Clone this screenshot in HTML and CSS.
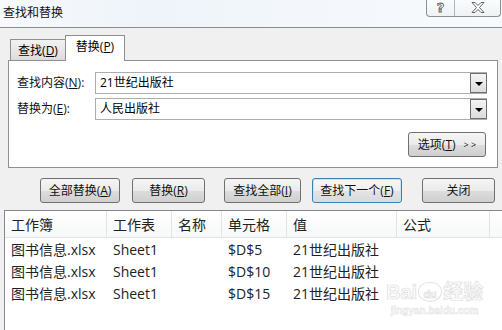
FILE: index.html
```html
<!DOCTYPE html>
<html lang="zh-CN">
<head>
<meta charset="utf-8">
<title>查找和替换</title>
<link rel="stylesheet" href="styles.css">
</head>
<body>
<div class="window">
  <div class="titlebar">
    <span class="title">查找和替换</span>
    <div class="caption-btns">
      <span class="cap help">?</span>
      <span class="cap close">
        <svg width="14" height="11" viewBox="0 0 14 11"><path d="M1 0.5h3l3 3 3-3h3l-4.5 5 4.5 5h-3l-3-3-3 3h-3l4.5-5z" fill="#fff" stroke="#555" stroke-width="0.9" stroke-linejoin="round"/></svg>
      </span>
    </div>
  </div>
  <div class="body">
    <div class="tabs">
      <div class="tab">查找(<u>D</u>)</div>
      <div class="tab active">替换(<u>P</u>)</div>
    </div>
    <div class="panel">
      <div class="field">
        <label>查找内容(<u>N</u>):</label>
        <div class="combo"><span class="val">21世纪出版社</span><span class="drop"></span></div>
      </div>
      <div class="field">
        <label>替换为(<u>E</u>):</label>
        <div class="combo"><span class="val">人民出版社</span><span class="drop"></span></div>
      </div>
      <div class="opts-row">
        <button class="btn opts">选项(<u>T</u>)<span class="chev">&gt; &gt;</span></button>
      </div>
    </div>
    <div class="actions">
      <button class="btn w-all">全部替换(<u>A</u>)</button>
      <button class="btn w-rep">替换(<u>R</u>)</button>
      <button class="btn w-findall">查找全部(<u>I</u>)</button>
      <button class="btn w-next focused">查找下一个(<u>F</u>)</button>
      <button class="btn w-close">关闭</button>
    </div>
    <div class="results">
      <div class="row head">
        <span>工作簿</span><span>工作表</span><span>名称</span><span>单元格</span><span>值</span><span>公式</span><span></span>
      </div>
      <div class="row">
        <span>图书信息.xlsx</span><span>Sheet1</span><span></span><span>$D$5</span><span>21世纪出版社</span><span></span><span></span>
      </div>
      <div class="row">
        <span>图书信息.xlsx</span><span>Sheet1</span><span></span><span>$D$10</span><span>21世纪出版社</span><span></span><span></span>
      </div>
      <div class="row">
        <span>图书信息.xlsx</span><span>Sheet1</span><span></span><span>$D$15</span><span>21世纪出版社</span><span></span><span></span>
      </div>
      <div class="watermark">
        <div class="wm-main">Bai<span class="paw">du</span>经验</div>
        <div class="wm-sub">jingyan.baidu.com</div>
      </div>
    </div>
  </div>
</div>
</body>
</html>
```
FILE: styles.css
```css
* { box-sizing: border-box; }
html, body { margin: 0; padding: 0; }
body {
  width: 502px;
  height: 330px;
  overflow: hidden;
  background: #f0f0f0;
  font-family: "Open Sans", "Noto Sans CJK SC", sans-serif;
  color: #000;
}
u { text-decoration: underline; text-underline-offset: 1px; }

.window { width: 502px; height: 330px; display: flex; flex-direction: column; }

.titlebar {
  height: 28px;
  flex: none;
  background: linear-gradient(90deg, #f7f9fc 0%, #eef4fa 30%, #f3f7fb 60%, #f7fafd 100%);
  border-bottom: 1px solid #8c8c8c;
  display: flex;
  align-items: flex-start;
  justify-content: space-between;
}
.title {
  font-size: 12px;
  line-height: 14px;
  margin: 6px 0 0 3px;
  color: #111;
}
.caption-btns {
  display: flex;
  height: 18px;
  margin-top: -1px;
  margin-right: 1px;
  border: 1px solid #8f8f8f;
  border-top: none;
  border-radius: 0 0 4px 4px;
  background: linear-gradient(#fbfcfd, #eef2f6);
}
.cap {
  display: flex;
  align-items: center;
  justify-content: center;
  height: 17px;
}
.help {
  width: 28px;
  border-right: 1px solid #b5b5b5;
  font-family: "DejaVu Sans", sans-serif;
  font-size: 13px;
  font-weight: bold;
  color: #fff;
  -webkit-text-stroke: 0.8px #555;
}
.close { width: 45px; }

.body { flex: 1; display: flex; flex-direction: column; }

.tabs {
  display: flex;
  align-items: flex-end;
  height: 25px;
  margin-top: 7px;
  padding-left: 10px;
  position: relative;
  z-index: 1;
}
.tab {
  font-size: 12px;
  line-height: 14px;
  border: 1px solid #8e8f8f;
  border-bottom: none;
  display: flex;
  align-items: center;
  justify-content: center;
}
.tab:first-child {
  width: 55px;
  height: 21px;
  border-right: none;
  background: linear-gradient(#f2f2f2, #dcdcdc);
  padding-top: 1px;
}
.tab.active {
  width: 60px;
  height: 26px;
  margin-bottom: -1px;
  background: #fff;
  padding-bottom: 3px;
}

.panel {
  margin-left: 8px;
  width: 490px;
  height: 108px;
  background: #fff;
  border: 1px solid #8e8f8f;
  padding: 11px 10px 10px 8px;
  display: flex;
  flex-direction: column;
  gap: 4px;
}
.field { display: flex; align-items: center; height: 22px; }
.field label {
  width: 78px;
  font-size: 12px;
  line-height: 14px;
  color: #111;
}
.combo {
  flex: 1;
  height: 22px;
  border: 1px solid #abadb3;
  display: flex;
  align-items: center;
  justify-content: space-between;
  padding-left: 4px;
}
.val { font-size: 12px; line-height: 14px; }
.drop {
  width: 17px;
  height: 20px;
  border: 1px solid #707070;
  background: linear-gradient(#f4f4f4, #dcdcdc);
  margin-right: -1px;
  position: relative;
}
.drop::after {
  content: "";
  position: absolute;
  left: 4px;
  top: 8px;
  border-left: 4px solid transparent;
  border-right: 4px solid transparent;
  border-top: 4px solid #000;
}
.opts-row { display: flex; justify-content: flex-end; margin-top: 8px; padding-right: 1px; }

.btn {
  font-family: inherit;
  font-size: 12px;
  line-height: 14px;
  height: 25px;
  padding: 0;
  border: 1px solid #707070;
  border-radius: 3px;
  background: linear-gradient(#f5f5f5 0%, #ebebeb 50%, #dddddd 51%, #cfcfcf 100%);
  color: #111;
  display: flex;
  align-items: center;
  justify-content: center;
}
.opts { width: 78px; }
.chev { font-size: 9px; margin-left: 8px; letter-spacing: 0; }

.actions { display: flex; margin-top: 10px; padding-left: 40px; height: 25px; }
.w-all { width: 80px; }
.w-rep { width: 73px; margin-left: 12px; }
.w-findall { width: 77px; margin-left: 19px; }
.w-next { width: 90px; margin-left: 11px; }
.w-close { width: 73px; margin-left: 20px; }
.btn.focused {
  border-color: #3c7fb1;
  box-shadow: inset 0 0 0 1px #c6e4f7;
  background: linear-gradient(#f7f7f7 0%, #efefef 50%, #e4e4e4 51%, #dadada 100%);
}

.results {
  margin-top: 7px;
  margin-left: 4px;
  flex: 1;
  background: #fff;
  border: 1px solid #828790;
  border-right: none;
  border-bottom: none;
  position: relative;
}
.row {
  display: grid;
  grid-template-columns: 102px 65px 50px 65px 110px 93px 1fr;
  height: 22px;
  align-items: center;
  font-size: 14px;
  line-height: 22px;
  color: #222;
}
.row span { padding-left: 6px; white-space: nowrap; }
.row.head {
  height: 27px;
  margin-bottom: 1px;
  border-bottom: 1px solid #e3e3e3;
  background: linear-gradient(#ffffff, #f7f8f9);
  align-items: stretch;
}
.row.head span {
  border-right: 1px solid #e3e3e3;
  display: flex;
  align-items: center;
  padding-top: 1px;
}
.row.head span:last-child { border-right: none; }

.watermark {
  position: absolute;
  left: 381px;
  top: 70px;
  pointer-events: none;
  text-align: center;
}
.wm-main {
  font-family: "Liberation Sans", "Noto Sans CJK SC", sans-serif;
  font-size: 20px;
  font-weight: bold;
  line-height: 22px;
  color: #fbfbfb;
  -webkit-text-stroke: 0.7px #dedede;
  display: flex;
  align-items: center;
}
.paw {
  font-size: 11px;
  width: 24px;
  height: 20px;
  margin: 0 1px;
  border-radius: 45% 45% 50% 50%;
  border: 1px solid #e2e2e2;
  display: flex;
  align-items: flex-end;
  justify-content: center;
  line-height: 13px;
}
.wm-sub {
  font-family: "Liberation Sans", sans-serif;
  font-size: 10px;
  line-height: 12px;
  font-weight: bold;
  color: #f6f6f6;
  -webkit-text-stroke: 0.4px #e0e0e0;
  margin-top: 2px;
}
```
